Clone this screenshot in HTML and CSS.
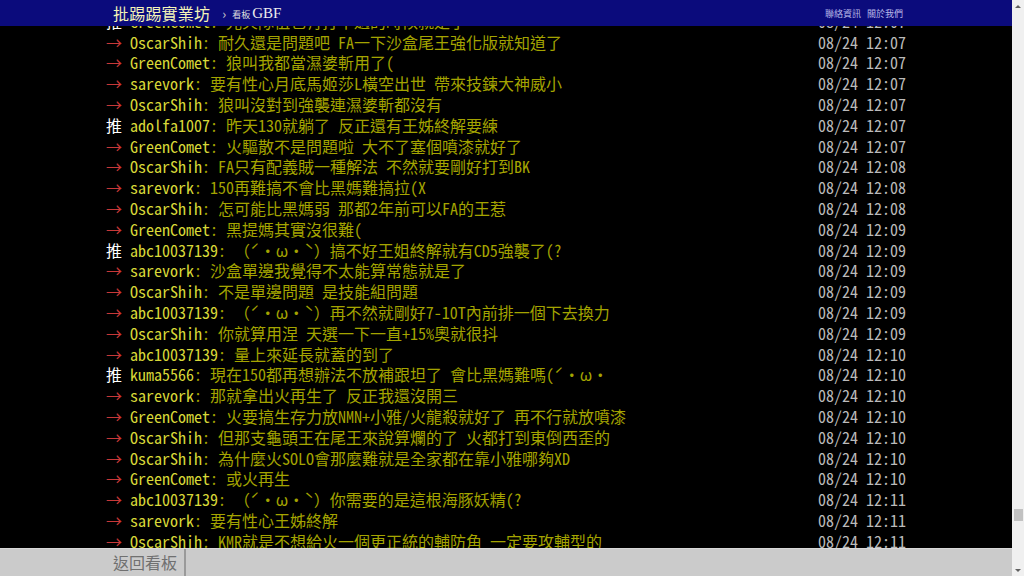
FILE: index.html
```html
<!DOCTYPE html>
<html lang="zh-Hant-TW">
<head>
  <meta charset="UTF-8">
  <meta name="viewport" content="width=device-width, initial-scale=1.0">
  <title>批踢踢實業坊 › 看板 GBF</title>
  <link rel="stylesheet" href="styles.css">
</head>
<body>
<div id="topbar-container">
  <div id="topbar" class="bbs-content">
    <a id="logo" href="#">批踢踢實業坊</a>
    <span class="crumb">›</span>
    <a class="board" href="#"><span class="board-label">看板 </span>GBF</a>
    <div class="links">
      <a href="#">聯絡資訊</a>
      <a href="#">關於我們</a>
    </div>
  </div>
</div>

<div id="main-container">
  <div id="main-content" class="bbs-screen bbs-content">
    <div class="push"><span class="hl push-tag">推 </span><span class="f3 hl push-userid">GreenComet</span><span class="f3 push-content">: 光火隊伍也有打不過的時候就是了</span><span class="push-ipdatetime">08/24 12:07</span></div>
    <div class="push"><span class="f1 hl push-tag">→ </span><span class="f3 hl push-userid">OscarShih</span><span class="f3 push-content">: 耐久還是問題吧 FA一下沙盒尾王強化版就知道了</span><span class="push-ipdatetime">08/24 12:07</span></div>
    <div class="push"><span class="f1 hl push-tag">→ </span><span class="f3 hl push-userid">GreenComet</span><span class="f3 push-content">: 狼叫我都當濕婆斬用了(</span><span class="push-ipdatetime">08/24 12:07</span></div>
    <div class="push"><span class="f1 hl push-tag">→ </span><span class="f3 hl push-userid">sarevork</span><span class="f3 push-content">: 要有性心月底馬姬莎L橫空出世 帶來技鍊大神威小</span><span class="push-ipdatetime">08/24 12:07</span></div>
    <div class="push"><span class="f1 hl push-tag">→ </span><span class="f3 hl push-userid">OscarShih</span><span class="f3 push-content">: 狼叫沒對到強襲連濕婆斬都沒有</span><span class="push-ipdatetime">08/24 12:07</span></div>
    <div class="push"><span class="hl push-tag">推 </span><span class="f3 hl push-userid">adolfa1007</span><span class="f3 push-content">: 昨天130就躺了 反正還有王姊終解要練</span><span class="push-ipdatetime">08/24 12:07</span></div>
    <div class="push"><span class="f1 hl push-tag">→ </span><span class="f3 hl push-userid">GreenComet</span><span class="f3 push-content">: 火驅散不是問題啦 大不了塞個噴漆就好了</span><span class="push-ipdatetime">08/24 12:07</span></div>
    <div class="push"><span class="f1 hl push-tag">→ </span><span class="f3 hl push-userid">OscarShih</span><span class="f3 push-content">: FA只有配義賊一種解法 不然就要剛好打到BK</span><span class="push-ipdatetime">08/24 12:08</span></div>
    <div class="push"><span class="f1 hl push-tag">→ </span><span class="f3 hl push-userid">sarevork</span><span class="f3 push-content">: 150再難搞不會比黑媽難搞拉(X</span><span class="push-ipdatetime">08/24 12:08</span></div>
    <div class="push"><span class="f1 hl push-tag">→ </span><span class="f3 hl push-userid">OscarShih</span><span class="f3 push-content">: 怎可能比黑媽弱 那都2年前可以FA的王惹</span><span class="push-ipdatetime">08/24 12:08</span></div>
    <div class="push"><span class="f1 hl push-tag">→ </span><span class="f3 hl push-userid">GreenComet</span><span class="f3 push-content">: 黑提媽其實沒很難(</span><span class="push-ipdatetime">08/24 12:09</span></div>
    <div class="push"><span class="hl push-tag">推 </span><span class="f3 hl push-userid">abc10037139</span><span class="f3 push-content">: （ˊ・ω・ˋ）搞不好王姐終解就有CD5強襲了(?</span><span class="push-ipdatetime">08/24 12:09</span></div>
    <div class="push"><span class="f1 hl push-tag">→ </span><span class="f3 hl push-userid">sarevork</span><span class="f3 push-content">: 沙盒單邊我覺得不太能算常態就是了</span><span class="push-ipdatetime">08/24 12:09</span></div>
    <div class="push"><span class="f1 hl push-tag">→ </span><span class="f3 hl push-userid">OscarShih</span><span class="f3 push-content">: 不是單邊問題 是技能組問題</span><span class="push-ipdatetime">08/24 12:09</span></div>
    <div class="push"><span class="f1 hl push-tag">→ </span><span class="f3 hl push-userid">abc10037139</span><span class="f3 push-content">: （ˊ・ω・ˋ）再不然就剛好7-10T內前排一個下去換力</span><span class="push-ipdatetime">08/24 12:09</span></div>
    <div class="push"><span class="f1 hl push-tag">→ </span><span class="f3 hl push-userid">OscarShih</span><span class="f3 push-content">: 你就算用涅 天選一下一直+15%奧就很抖</span><span class="push-ipdatetime">08/24 12:09</span></div>
    <div class="push"><span class="f1 hl push-tag">→ </span><span class="f3 hl push-userid">abc10037139</span><span class="f3 push-content">: 量上來延長就蓋的到了</span><span class="push-ipdatetime">08/24 12:10</span></div>
    <div class="push"><span class="hl push-tag">推 </span><span class="f3 hl push-userid">kuma5566</span><span class="f3 push-content">: 現在150都再想辦法不放補跟坦了 會比黑媽難嗎(ˊ・ω・</span><span class="push-ipdatetime">08/24 12:10</span></div>
    <div class="push"><span class="f1 hl push-tag">→ </span><span class="f3 hl push-userid">sarevork</span><span class="f3 push-content">: 那就拿出火再生了 反正我還沒開三</span><span class="push-ipdatetime">08/24 12:10</span></div>
    <div class="push"><span class="f1 hl push-tag">→ </span><span class="f3 hl push-userid">GreenComet</span><span class="f3 push-content">: 火要搞生存力放NMN+小雅/火龍殺就好了 再不行就放噴漆</span><span class="push-ipdatetime">08/24 12:10</span></div>
    <div class="push"><span class="f1 hl push-tag">→ </span><span class="f3 hl push-userid">OscarShih</span><span class="f3 push-content">: 但那支龜頭王在尾王來說算爛的了 火都打到東倒西歪的</span><span class="push-ipdatetime">08/24 12:10</span></div>
    <div class="push"><span class="f1 hl push-tag">→ </span><span class="f3 hl push-userid">OscarShih</span><span class="f3 push-content">: 為什麼火SOLO會那麼難就是全家都在靠小雅哪夠XD</span><span class="push-ipdatetime">08/24 12:10</span></div>
    <div class="push"><span class="f1 hl push-tag">→ </span><span class="f3 hl push-userid">GreenComet</span><span class="f3 push-content">: 或火再生</span><span class="push-ipdatetime">08/24 12:10</span></div>
    <div class="push"><span class="f1 hl push-tag">→ </span><span class="f3 hl push-userid">abc10037139</span><span class="f3 push-content">: （ˊ・ω・ˋ）你需要的是這根海豚妖精(?</span><span class="push-ipdatetime">08/24 12:11</span></div>
    <div class="push"><span class="f1 hl push-tag">→ </span><span class="f3 hl push-userid">sarevork</span><span class="f3 push-content">: 要有性心王姊終解</span><span class="push-ipdatetime">08/24 12:11</span></div>
    <div class="push"><span class="f1 hl push-tag">→ </span><span class="f3 hl push-userid">OscarShih</span><span class="f3 push-content">: KMR就是不想給火一個更正統的輔防角 一定要攻輔型的</span><span class="push-ipdatetime">08/24 12:11</span></div>
  </div>
</div>

<div id="navigation-container">
  <div id="navigation" class="bbs-content">
    <a class="board" href="#">返回看板</a>
  </div>
</div>

<div class="scrollbar">
  <div class="arrow up"></div>
  <div class="track"><div class="thumb"></div></div>
  <div class="arrow down"></div>
</div>
</body>
</html>
```

FILE: styles.css
```css
html, body { margin: 0; padding: 0; height: 100%; overflow: hidden; }
body {
    background-color: #000;
    color: #ccc;
    font-family: "Noto Sans Mono CJK TC", "Liberation Mono", "Noto Sans CJK TC", monospace;
    font-size: 16px;
    margin-right: 12px;
}
a { text-decoration: none; color: inherit; }

.bbs-content { width: 800px; margin: 0 auto; box-sizing: border-box; }

/* top bar */
#topbar-container {
    position: fixed;
    top: 0; left: 0; right: 12px;
    height: 26px;
    background-color: #0b0b7c;
    z-index: 2;
}
#topbar {
    display: flex;
    align-items: center;
    height: 26px;
    padding: 0 3px 0 7px;
    font-family: "Noto Sans CJK TC", sans-serif;
}
#logo { color: #f4f4b8; font-size: 16px; letter-spacing: 0.2px; }
.crumb { color: #ccc; font-size: 13px; margin: 0 6px 0 12px; }
#topbar .board { color: #eee; font-family: "Liberation Serif", serif; font-size: 15px; }
.board-label { font-family: "Noto Sans CJK TC", sans-serif; font-size: 9px; color: #ddd; }
.links { margin-left: auto; display: flex; gap: 6px; font-size: 9px; color: #b8b8e8; }

/* comments */
#main-content { padding-top: 10.8px; }
.push { display: flex; height: 20.8px; line-height: 20.8px; white-space: pre; }
.push-ipdatetime { margin-left: auto; color: #bbb; }
.push-tag { color: #fff; }
.f1.hl { color: #c83838; }
.f3.hl { color: #d8d838; }
.f3 { color: #a4a400; }

/* bottom bar */
#navigation-container {
    position: fixed;
    bottom: 0; left: 0; right: 12px;
    height: 27px;
    background-color: #cbcbcb;
    border-top: 1px solid #d8d8d8;
    z-index: 2;
}
#navigation { display: flex; height: 27px; }
#navigation .board {
    display: block;
    padding: 0 7px;
    line-height: 27px;
    color: #707070;
    font-family: "Noto Sans CJK TC", sans-serif;
    font-size: 16px;
    border-right: 2px solid #9a9a9a;
}

/* fake scrollbar */
.scrollbar {
    position: fixed;
    top: 0; right: 0; bottom: 0;
    width: 12px;
    background-color: #f0f0f0;
    display: flex;
    flex-direction: column;
}
.arrow { height: 12px; display: flex; align-items: center; justify-content: center; }
.arrow::before {
    content: "";
    border-left: 3px solid transparent;
    border-right: 3px solid transparent;
}
.arrow.up::before { border-bottom: 3px solid #606060; }
.arrow.down::before { border-top: 3px solid #606060; }
.track { flex: 1; position: relative; }
.thumb {
    position: absolute;
    left: 2px; right: 1px;
    top: 497px;
    height: 12px;
    background-color: #c2c2c2;
}
```
